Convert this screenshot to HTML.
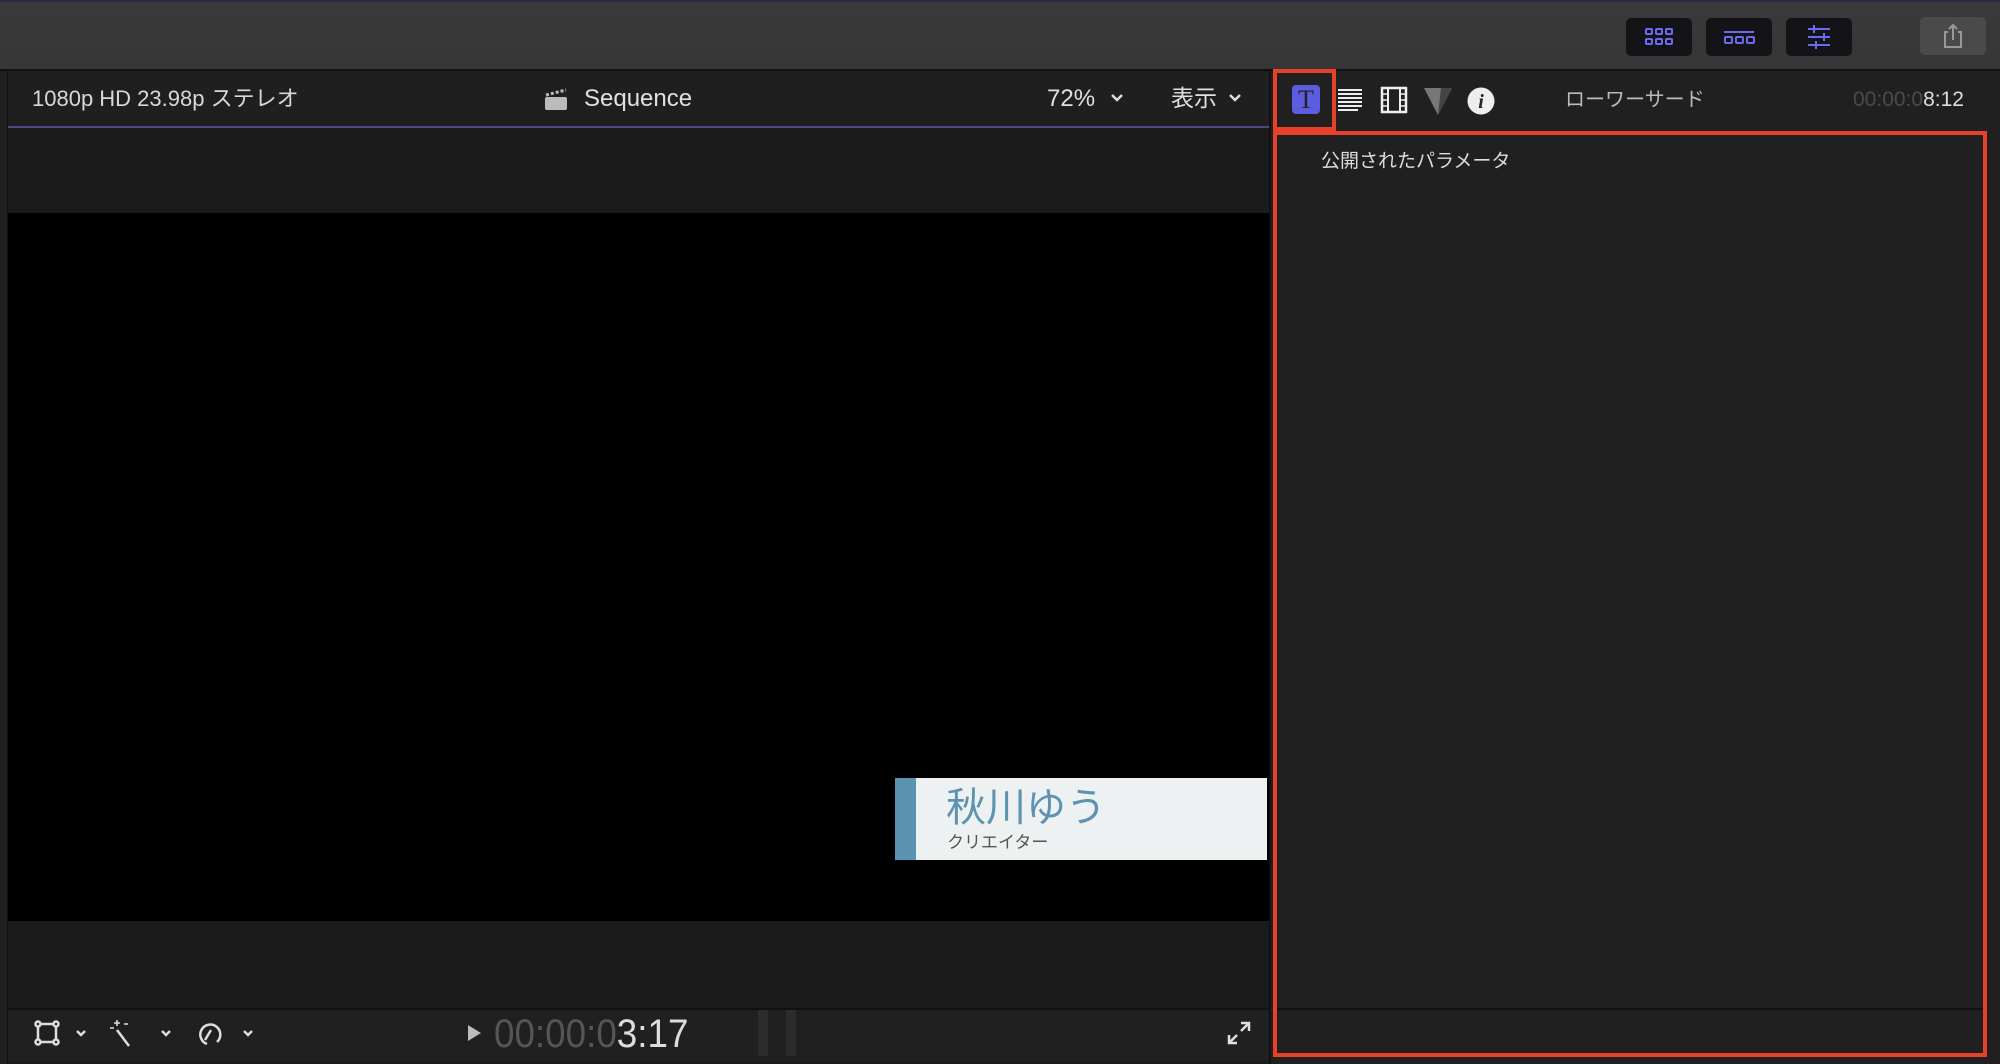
<!DOCTYPE html>
<html><head><meta charset="utf-8"><style>
*{margin:0;padding:0;box-sizing:border-box}
body{width:2000px;height:1064px;background:#1b1b1b;position:relative;overflow:hidden;font-family:"Liberation Sans","Noto Sans CJK JP",sans-serif;color:#ddd}
.a{position:absolute}
.top{left:0;top:0;width:2000px;height:71px;background:linear-gradient(#3a3a3a,#363636);border-top:2px solid #2a2a44;border-bottom:2px solid #111}
.btn{top:18px;width:66px;height:38px;background:#141418;border-radius:5px}
.t{white-space:nowrap;line-height:1}
</style></head><body>
<div class="a top"></div>
<div class="a btn" style="left:1626px"><svg width="66" height="38"><g fill="none" stroke="#6b6bf0" stroke-width="2"><rect x="20" y="11" width="6" height="5" rx="1"/><rect x="30" y="11" width="6" height="5" rx="1"/><rect x="40" y="11" width="6" height="5" rx="1"/><rect x="20" y="21" width="6" height="5" rx="1"/><rect x="30" y="21" width="6" height="5" rx="1"/><rect x="40" y="21" width="6" height="5" rx="1"/></g></svg></div>
<div class="a btn" style="left:1706px"><svg width="66" height="38"><g fill="none" stroke="#6b6bf0" stroke-width="2"><line x1="18" y1="14" x2="48" y2="14"/><rect x="19" y="19" width="7" height="6" rx="1"/><rect x="30" y="19" width="7" height="6" rx="1"/><rect x="41" y="19" width="7" height="6" rx="1"/></g></svg></div>
<div class="a btn" style="left:1786px"><svg width="66" height="38"><g stroke="#6b6bf0" stroke-width="2"><line x1="22" y1="11" x2="44" y2="11"/><line x1="22" y1="19" x2="44" y2="19"/><line x1="22" y1="27" x2="44" y2="27"/><line x1="28" y1="7" x2="28" y2="15"/><line x1="38" y1="15" x2="38" y2="23"/><line x1="30" y1="23" x2="30" y2="31"/></g></svg></div>
<div class="a" style="left:1920px;top:17px;width:66px;height:38px;background:#4a4a4a;border-radius:5px"><svg width="66" height="38"><g fill="none" stroke="#999" stroke-width="2"><path d="M28 15h-3v15h16v-15h-3"/><path d="M33 23V8M29 12l4-4 4 4"/></g></svg></div>

<div class="a" style="left:0;top:71px;width:8px;height:993px;background:#202020;border-right:1px solid #111"></div>
<div class="a" style="left:8px;top:71px;width:1261px;height:57px;background:#1f1f1f;border-bottom:2px solid #4a4a80"></div>
<div class="a t" style="left:32px;top:88px;font-size:22px;color:#d8d8d8">1080p HD 23.98p ステレオ</div>
<svg class="a" style="left:544px;top:88px" width="24" height="22"><rect x="1" y="9" width="22" height="13" rx="2" fill="#bbb"/><path d="M2 7l20-5" stroke="#bbb" stroke-width="3" stroke-dasharray="3 2"/></svg>
<div class="a t" style="left:584px;top:87px;font-size:24px;color:#e0e0e0">Sequence</div>
<div class="a t" style="left:1047px;top:87px;font-size:24px;color:#e0e0e0">72%</div>
<svg class="a" style="left:1110px;top:93px" width="14" height="10"><path d="M2 2l5 5 5-5" stroke="#ddd" stroke-width="2.5" fill="none"/></svg>
<div class="a t" style="left:1171px;top:87px;font-size:23px;color:#e0e0e0">表示</div>
<svg class="a" style="left:1228px;top:93px" width="14" height="10"><path d="M2 2l5 5 5-5" stroke="#ddd" stroke-width="2.5" fill="none"/></svg>
<div class="a" style="left:8px;top:130px;width:1261px;height:83px;background:#1b1b1b"></div>
<div class="a" style="left:8px;top:213px;width:1261px;height:708px;background:#000"></div>
<div class="a" style="left:8px;top:921px;width:1261px;height:87px;background:#1a1a1a"></div>
<div class="a" style="left:8px;top:1008px;width:1261px;height:54px;background:#202020;border-top:2px solid #111"></div>
<div class="a" style="left:895px;top:778px;width:372px;height:82px;background:#eef1f2"></div>
<div class="a" style="left:895px;top:778px;width:21px;height:82px;background:#5b93b0"></div>
<div class="a t" style="left:946px;top:788px;font-size:40px;color:#5b93b0">秋川ゆう</div>
<div class="a t" style="left:947px;top:834px;font-size:17px;color:#555">クリエイター</div>
<svg class="a" style="left:32px;top:1018px" width="240" height="30"><g fill="none" stroke="#ddd" stroke-width="2.5"><rect x="6" y="6" width="18" height="18"/><circle cx="6" cy="6" r="2.5" fill="#222"/><circle cx="24" cy="6" r="2.5" fill="#222"/><circle cx="6" cy="24" r="2.5" fill="#222"/><circle cx="24" cy="24" r="2.5" fill="#222"/><path d="M45 13l4 4 4-4"/><path d="M85 12l12 16"/><path d="M85 2v6M82 5h6M78 10h4M92 6h4" stroke-width="1.6"/><path d="M130 13l4 4 4-4"/><path d="M175 26a10 10 0 1 1 10-2"/><path d="M173 22l6-10"/><path d="M212 13l4 4 4-4"/></g></svg>
<svg class="a" style="left:466px;top:1024px" width="16" height="18"><path d="M2 1l13 8-13 8z" fill="#bbb"/></svg>
<div class="a t" style="left:494px;top:1014px;font-size:40px;color:#555;transform:scaleX(0.92);transform-origin:left;font-weight:300">00:00:0<span style="color:#ddd">3:17</span></div>
<div class="a" style="left:758px;top:1010px;width:10px;height:46px;background:#2c2c2c"></div>
<div class="a" style="left:786px;top:1010px;width:10px;height:46px;background:#2c2c2c"></div>
<svg class="a" style="left:1226px;top:1020px" width="26" height="26"><g fill="none" stroke="#ddd" stroke-width="2.5"><path d="M15 3h8v8M23 3l-8 8M11 23h-8v-8M3 23l8-8"/></g></svg>

<div class="a" style="left:1269px;top:71px;width:731px;height:993px;background:#202020;border-left:2px solid #111"></div>
<div class="a" style="left:1273px;top:1008px;width:714px;height:2px;background:#111"></div>
<div class="a" style="left:1292px;top:85px;width:28px;height:29px;background:#5c5ce0;border-radius:4px;color:#222;font-family:'Liberation Serif',serif;font-size:26px;text-align:center;line-height:29px">T</div>
<svg class="a" style="left:1336px;top:87px" width="28" height="26"><g stroke="#eee" stroke-width="2"><path d="M2 3h24M2 7h24M2 11h24M2 15h24M2 19h24M2 23h20"/></g></svg>
<svg class="a" style="left:1380px;top:86px" width="28" height="28"><rect x="2" y="2" width="24" height="24" fill="none" stroke="#eee" stroke-width="2.5"/><path d="M8 2v24M20 2v24" stroke="#eee" stroke-width="2"/><path d="M2 8h6M2 14h6M2 20h6M20 8h6M20 14h6M20 20h6" stroke="#eee" stroke-width="1.5"/></svg>
<svg class="a" style="left:1423px;top:86px" width="30" height="30"><path d="M1 2h28L15 29z" fill="#777"/><path d="M15 29L29 2H18z" fill="#444"/></svg>
<svg class="a" style="left:1466px;top:86px" width="30" height="30"><circle cx="15" cy="15" r="13.5" fill="#eee"/><text x="15" y="22" font-family="Liberation Serif" font-style="italic" font-weight="bold" font-size="20" text-anchor="middle" fill="#222">i</text></svg>
<div class="a t" style="left:1565px;top:90px;font-size:20px;color:#bbb">ローワーサード</div>
<div class="a t" style="left:1853px;top:89px;font-size:21px;color:#4a4a4a">00:00:0<span style="color:#ddd">8:12</span></div>
<div class="a t" style="left:1321px;top:152px;font-size:19px;color:#ddd">公開されたパラメータ</div>
<div class="a" style="left:1273px;top:69px;width:63px;height:62px;border:4px solid #e8412a"></div>
<div class="a" style="left:1273px;top:131px;width:714px;height:926px;border:4px solid #e8412a"></div>
</body></html>
